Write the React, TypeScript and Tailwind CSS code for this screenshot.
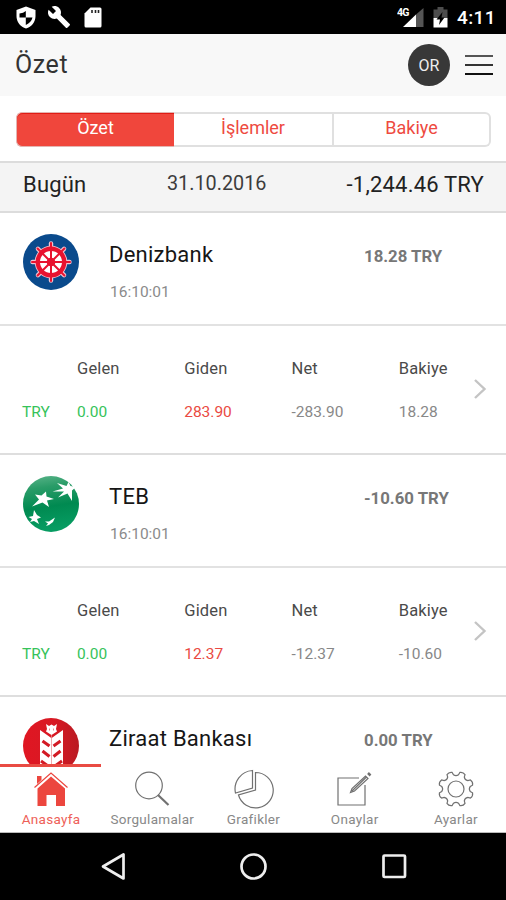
import { ReactNode } from "react";
import { clsx } from "clsx";
import { MdBuild } from "react-icons/md";

interface Account {
  name: string;
  time?: string;
  total: string;
  logo: ReactNode;
  values?: string[];
}

function DenizbankLogo() {
  const spokes = [0, 45, 90, 135, 180, 225, 270, 315];
  return (
    <svg viewBox="0 0 56 56" className="w-14 h-14">
      <circle cx="28" cy="28" r="28" fill="#0a4a8c" />
      {spokes.map((a) => (
        <g key={a} transform={`rotate(${a} 28 28)`}>
          <path d="M28 15V9.500" stroke="#f3c3d0" strokeWidth="4.400" strokeLinecap="round" />
        </g>
      ))}
      <circle cx="28" cy="28" r="16.300" fill="#f3c3d0" />
      <circle cx="28" cy="28" r="13.200" fill="#fff" stroke="#e8122f" strokeWidth="4.400" />
      {spokes.map((a) => (
        <g key={a} transform={`rotate(${a} 28 28)`}>
          <path d="M28 28V9" stroke="#e8122f" strokeWidth="2" strokeLinecap="round" />
        </g>
      ))}
      <circle cx="28" cy="28" r="4.300" fill="#e8122f" />
    </svg>
  );
}

function TebLogo() {
  return (
    <svg viewBox="0 0 56 56" className="w-14 h-14">
      <defs>
        <linearGradient id="teb" x1="0" y1="0" x2="0.15" y2="1">
          <stop offset="0" stopColor="#5cb58b" />
          <stop offset="0.25" stopColor="#2a9c68" />
          <stop offset="0.6" stopColor="#008a51" />
          <stop offset="1" stopColor="#079c62" />
        </linearGradient>
      </defs>
      <circle cx="28" cy="28" r="28" fill="url(#teb)" />
      <g fill="#fff">
        <path d="M29.500 15.500L40 12.500L34 7L43.500 10L45.500 6L47.500 10L53 11L49 14.500L49 25L44.500 17.500L35 21.500L41 15.500Z" />
        <path d="M12 18.500L18.500 19.500L23 15.500L23.500 20.500L31 23L24 24.500L26 31L19.500 26.500L9 30.500L16 23.500Z" />
        <path d="M5.500 41L10 40L11 34L14 39L18 41.500L14 43L16 48L11 45L7 46L9 43Z" />
        <path d="M22 45.500L26 45.500L32 41.500L30 46L26 49L23 50L25 47.500Z" />
      </g>
    </svg>
  );
}

function ZiraatLogo() {
  return (
    <svg viewBox="0 0 56 56" className="w-14 h-14">
      <defs>
        <linearGradient id="ziraat" x1="0" y1="0" x2="1" y2="0">
          <stop offset="0" stopColor="#e01622" />
          <stop offset="0.55" stopColor="#d81924" />
          <stop offset="1" stopColor="#b91a22" />
        </linearGradient>
      </defs>
      <circle cx="28" cy="28" r="28" fill="url(#ziraat)" />
      <path d="M17 12L28.300 20V50H19L17 46ZM40 12L28.700 20V50H38L40 46Z" fill="#fff" />
      <path d="M23 6L26 8L28.500 6.500L31 8L34 6L33 11L34 13.500L28.500 17L23 13.500L24 11Z" fill="#fff" />
      <path d="M19.500 23L26.500 28M19.500 33L26.500 38.500M18 43L26.500 49M37.500 23L30.500 28M37.500 33L30.500 38.500M39 43L30.500 49" stroke="#d31a24" strokeWidth="3" />
      <path d="M28.500 17V50" stroke="#f0aeb2" strokeWidth="0.600" />
      <path d="M26.500 10.500V12.500M30.500 10.500V12.500" stroke="#e98a90" strokeWidth="1" />
    </svg>
  );
}

function StatusBar() {
  return (
    <div className="h-[34px] shrink-0 bg-black flex items-center justify-between pl-4 pr-2.5 text-white">
      <div className="flex items-center">
        <svg viewBox="0 0 20 23" className="w-5 h-[23px]">
          <path d="M10 0.500L19.500 4V10C19.500 16 15.500 21 10 22.500C4.500 21 0.500 16 0.500 10V4Z" fill="#fff" />
          <path d="M9.800 5V11.500H3.500V7.500Q7.500 7 9.800 5ZM9.800 11.500H16.500Q15.500 16 9.800 19Z" fill="#000" />
        </svg>
        <MdBuild className="w-6 h-6 ml-[11px]" />
        <svg viewBox="0 0 18 21" className="w-[18px] h-[21px] ml-[13px]">
          <path d="M6.500 0.500H16Q17.500 0.500 17.500 2V19Q17.500 20.500 16 20.500H2Q0.500 20.500 0.500 19V6.500Z" fill="#fff" />
          <path d="M8 3V6M11.500 3V6M14.500 3V6" stroke="#222" strokeWidth="1.600" />
        </svg>
      </div>
      <div className="flex items-center">
        <svg viewBox="0 0 28 22" className="w-7 h-[22px]">
          <path d="M26.500 2V21H19V8.500Z" fill="#555" />
          <path d="M19 8.500V21H6Z" fill="#fff" />
          <text x="0" y="9.500" fill="#fff" fontFamily="Roboto" fontWeight="700" fontSize="10.500" textLength="12.500">4G</text>
        </svg>
        <svg viewBox="0 0 15 21" className="w-[15px] h-[21px] ml-2">
          <path d="M4.500 0H10.500V2.500H14.500V11H0.500V2.500H4.500Z" fill="#4d4d4d" />
          <path d="M0.500 11H14.500V20.500H0.500Z" fill="#fff" />
          <path d="M9.500 5L3.500 12.500H7L6 18L11.500 10.500H8.500Z" fill="#000" />
        </svg>
        <span className="ml-[9px] text-[19px] leading-none font-medium tracking-[0.4px] pt-px">4:11</span>
      </div>
    </div>
  );
}

function Header() {
  return (
    <header className="h-[62px] shrink-0 bg-[#f8f8f8] flex items-center pl-[15px] pr-[13px]">
      <h1 className="text-[25px] leading-none tracking-[0.6px] text-[#333] flex-1 pb-px">Özet</h1>
      <div className="w-[42px] h-[42px] rounded-full bg-[#383838] text-[#eee] text-base flex items-center justify-center pt-0.5">OR</div>
      <div className="ml-[15px] w-7 h-5 flex flex-col justify-between">
        <span className="h-0.5 bg-[#555]" />
        <span className="h-0.5 bg-[#333]" />
        <span className="h-0.5 bg-[#111]" />
      </div>
    </header>
  );
}

function Segments() {
  return (
    <div className="h-[65px] shrink-0 bg-white pt-4 pl-4 pr-[15px]">
      <div className="h-[35px] flex text-[18px] leading-[28px] text-[#ee4a3f] text-center">
        <div className="w-[158px] rounded-l-md border-y border-l border-y-[#e3b5b2] border-l-[#e3b5b2] bg-[#f0463c] text-white">
          <div className="border-t border-[#e01b14] rounded-tl-md">Özet</div>
        </div>
        <div className="w-[160px] border-y-2 border-r-2 border-[#e0e0e0]">İşlemler</div>
        <div className="flex-1 rounded-r-md border-y-2 border-r-2 border-[#e0e0e0]">Bakiye</div>
      </div>
    </div>
  );
}

function AccountRow({ name, time, total, logo, values }: Account) {
  const labels = ["Gelen", "Giden", "Net", "Bakiye"];
  return (
    <section className="shrink-0">
      <div className={clsx("flex pl-[23px] pt-[21px]", values && "h-[113px] border-b-2 border-[#e2e2e2]")}>
        {logo}
        <div className="ml-[30px] w-[255px]">
          <div className="text-[22px] leading-[42px] tracking-[0.25px] text-[#161616]">{name}</div>
          {time && <div className="pl-px text-[15.500px] leading-[32px] text-[#8b8b8b]">{time}</div>}
        </div>
        <div className="text-[16.800px] leading-[44px] font-bold text-[#777]">{total}</div>
      </div>
      {values && (
        <div className="relative h-[129px] border-b-2 border-[#dedede] pl-[22px] pt-8">
          <div className="flex pl-[55px] text-[16.500px] leading-[22px] tracking-[0.15px] text-[#4a4a4a]">
            {labels.map((label) => (
              <span key={label} className="w-[107.500px]">{label}</span>
            ))}
          </div>
          <div className="flex mt-[21px] text-[15.500px] leading-[22px] text-[#888]">
            <span className="w-[55px] text-[#36c35a]">TRY</span>
            {values.map((value, i) => (
              <span key={i} className={clsx("w-[107.500px]", i === 0 && "text-[#36c35a]", i === 1 && "text-[#ea4a42]")}>{value}</span>
            ))}
          </div>
          <svg viewBox="0 0 14 22" className="absolute right-[19px] top-[52px] w-3.5 h-[22px]">
            <path d="M2 2L11.500 11L2 20" fill="none" stroke="#c4c4c4" strokeWidth="2.400" />
          </svg>
        </div>
      )}
    </section>
  );
}

const gearPath = Array.from({ length: 8 }, (_, i) => {
  // each tooth spans 45 degrees: flat top, then a rounded dip
  const p = (deg: number, r: number) => {
    const t = ((i * 45 + deg) * Math.PI) / 180;
    return `${(20 + r * Math.sin(t)).toFixed(2)} ${(20 - r * Math.cos(t)).toFixed(2)}`;
  };
  return `${i ? "L" : "M"}${p(10, 14.5)}L${p(13, 17)}Q${p(22.5, 18.6)} ${p(32, 17)}L${p(35, 14.5)}Q${p(45, 12.4)} ${p(55, 14.5)}`;
}).join("") + "Z";

function BottomTabs() {
  const tabs = [
    {
      label: "Anasayfa",
      icon: (
        <g fill="#ec463e">
          <path d="M6 7H10.500V11L6 15Z" />
          <path d="M20 7.500L34 19.500V37H25V26H15.500V37H6.500V19.500Z" />
          <path d="M3.500 18.500L20 4L36.500 18.500" fill="none" stroke="#ec463e" strokeWidth="1.200" />
        </g>
      ),
    },
    {
      label: "Sorgulamalar",
      icon: (
        <>
          <circle cx="17" cy="16.500" r="13.300" />
          <path d="M26 26L36.500 36" strokeWidth="2.200" />
        </>
      ),
    },
    {
      label: "Grafikler",
      icon: (
        <>
          <path d="M18.500 1.500V19L1.500 24A18.500 18.500 0 0 1 18.500 1.500Z" />
          <path d="M21.500 3.500A17.700 17.700 0 1 1 4.500 26L21.500 21Z" />
        </>
      ),
    },
    {
      label: "Onaylar",
      icon: (
        <>
          <path d="M24 9H3V36H30V16" />
          <path d="M15.500 23.500L17 19.500L30.500 7L33 9.500L19.500 22ZM17 22L31.500 8" />
          <path d="M33 4L35.500 6.500" strokeWidth="2.500" />
        </>
      ),
    },
    {
      label: "Ayarlar",
      icon: (
        <>
          <path d={gearPath} />
          <circle cx="20" cy="20" r="8" />
        </>
      ),
    },
  ];

  return (
    <nav className="h-[69px] shrink-0 bg-white flex border-b border-[#bbb]">
      {tabs.map((tab, i) => (
        <div key={tab.label} className={clsx("flex-1 flex flex-col items-center border-t-[3px]", i === 0 ? "border-[#e94b43] text-[#ee6058]" : "border-transparent text-[#888]")}>
          <svg viewBox="0 0 40 40" fill="none" stroke="#717171" strokeWidth="1.200" className="w-10 h-10 mt-0.5 ml-px shrink-0">
            {i === 0 ? <g stroke="none">{tab.icon}</g> : tab.icon}
          </svg>
          <span className="text-[13.500px] leading-[21px] tracking-[0.300px] whitespace-nowrap ml-px">{tab.label}</span>
        </div>
      ))}
    </nav>
  );
}

export default function App() {
  const accounts: Account[] = [
    { name: "Denizbank", time: "16:10:01", total: "18.28 TRY", logo: <DenizbankLogo />, values: ["0.00", "283.90", "-283.90", "18.28"] },
    { name: "TEB", time: "16:10:01", total: "-10.60 TRY", logo: <TebLogo />, values: ["0.00", "12.37", "-12.37", "-10.60"] },
    { name: "Ziraat Bankası", total: "0.00 TRY", logo: <ZiraatLogo /> },
  ];

  return (
    <div className="w-full h-[900px] flex flex-col bg-white overflow-hidden font-[Roboto,sans-serif]">
      <StatusBar />
      <Header />
      <Segments />
      <div className="h-[52px] shrink-0 bg-[#f4f4f4] border-y-2 border-[#dcdcdc] flex pl-[23px] pr-[22px] text-[#222] leading-[43px]">
        <span className="w-[144px] text-[22px] tracking-[0.200px]">Bugün</span>
        <span className="flex-1 text-[19.800px] leading-[42px] text-[#3c3c3c]">31.10.2016</span>
        <span className="text-[22px] tracking-[0.200px]">-1,244.46 TRY</span>
      </div>
      <main className="flex-1 min-h-0 flex flex-col overflow-hidden">
        {accounts.map((account) => (
          <AccountRow key={account.name} {...account} />
        ))}
      </main>
      <BottomTabs />
      <div className="h-[67px] shrink-0 bg-black">
        <svg viewBox="0 0 506 67" className="w-full h-full" fill="none" stroke="#eee" strokeWidth="2.700">
          <path d="M103 33.500L123.500 21.500V45.500Z" strokeLinejoin="round" />
          <circle cx="253.500" cy="33.500" r="12" />
          <rect x="383.500" y="22.500" width="21.500" height="21.500" rx="1" />
        </svg>
      </div>
    </div>
  );
}
